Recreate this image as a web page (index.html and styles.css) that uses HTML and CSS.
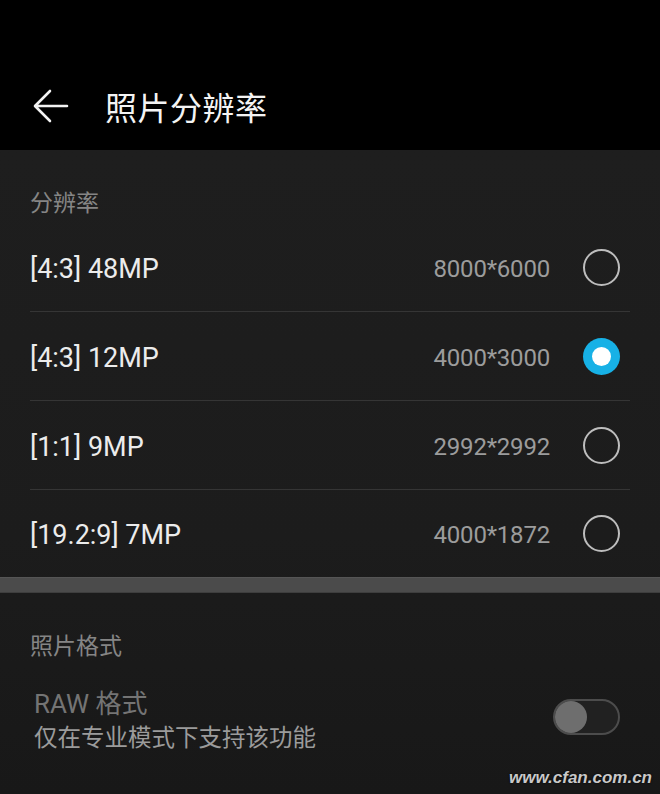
FILE: index.html
```html
<!DOCTYPE html>
<html lang="zh-CN">
<head>
<meta charset="utf-8">
<title>照片分辨率</title>
<link rel="stylesheet" href="styles.css">
</head>
<body>
<div class="screen">
  <header class="appbar">
    <svg class="back" width="36" height="34" viewBox="0 0 36 34" aria-hidden="true">
      <path d="M34 17 H3 M17 2 L2 17 L17 32" fill="none" stroke="#f2f2f2" stroke-width="2.6" stroke-linecap="round" stroke-linejoin="round"/>
    </svg>
    <h1 class="title">照片分辨率</h1>
  </header>

  <main class="content">
    <section class="group">
      <div class="group-label">分辨率</div>
      <ul class="list">
        <li class="row"><span class="name">[4:3] 48MP</span><span class="value">8000*6000</span><span class="radio"></span></li>
        <li class="row"><span class="name">[4:3] 12MP</span><span class="value">4000*3000</span><span class="radio checked"></span></li>
        <li class="row"><span class="name">[1:1] 9MP</span><span class="value">2992*2992</span><span class="radio"></span></li>
        <li class="row"><span class="name">[19.2:9] 7MP</span><span class="value">4000*1872</span><span class="radio"></span></li>
      </ul>
    </section>

    <div class="band"></div>

    <section class="group">
      <div class="group-label">照片格式</div>
      <div class="switch-row">
        <div class="switch-text">
          <div class="switch-title">RAW 格式</div>
          <div class="switch-sub">仅在专业模式下支持该功能</div>
        </div>
        <span class="toggle"><span class="knob"></span></span>
      </div>
    </section>
  </main>

  <div class="watermark">www.cfan.com.cn</div>
</div>
</body>
</html>
```

FILE: styles.css
```css
* { box-sizing: border-box; }

html, body {
  margin: 0;
  padding: 0;
  background: #1b1b1b;
}

body {
  font-family: Roboto, "Noto Sans CJK SC", sans-serif;
  color: #e8e8e8;
}

.screen {
  position: relative;
  width: 660px;
  height: 794px;
  overflow: hidden;
  display: flex;
  flex-direction: column;
}

.appbar {
  height: 150px;
  flex: none;
  background: #000;
  display: flex;
  align-items: center;
  padding-top: 62px;
  padding-left: 33px;
}

.back {
  display: block;
  flex: none;
}

.title {
  margin: 0 0 0 36px;
  font-family: "Noto Sans CJK SC", sans-serif;
  font-weight: 400;
  font-size: 32px;
  line-height: 40px;
  color: #f4f4f4;
  letter-spacing: 0.5px;
}

.content {
  flex: 1;
  background: linear-gradient(#1e1e1e, #1c1c1c 60%, #181818);
}

.group-label {
  padding: 40px 30px 10px;
  font-family: "Noto Sans CJK SC", sans-serif;
  font-size: 23px;
  line-height: 23px;
  color: #858585;
}

.list {
  list-style: none;
  margin: 0;
  padding: 0;
}

.row {
  height: 89px;
  margin: 0 30px;
  padding-right: 10px;
  display: flex;
  align-items: center;
  border-bottom: 1px solid #353535;
}

.row:last-child {
  border-bottom: none;
  height: 87px;
}

.name {
  flex: 1;
  font-size: 27px;
  padding-top: 3px;
  color: #ececec;
}

.value {
  font-size: 24px;
  padding-top: 3px;
  color: #9c9c9c;
  margin-right: 33px;
  letter-spacing: -0.2px;
}

.radio {
  width: 37px;
  height: 37px;
  border-radius: 50%;
  border: 2px solid #bdbdbd;
  flex: none;
  display: flex;
  align-items: center;
  justify-content: center;
}

.radio.checked {
  border: none;
  background: #17b1e6;
}

.radio.checked::after {
  content: "";
  width: 19px;
  height: 19px;
  border-radius: 50%;
  background: #fff;
}

.band {
  height: 16px;
  background: #4b4b4b;
  border-top: 1px solid #555;
  border-bottom: 1px solid #3e3e3e;
}

.switch-row {
  display: flex;
  align-items: flex-start;
  padding: 23px 40px 0 34px;
}

.switch-text {
  flex: 1;
}

.switch-title {
  font-size: 26px;
  line-height: 30px;
  color: #747474;
}

.switch-sub {
  margin-top: 2px;
  font-family: "Noto Sans CJK SC", sans-serif;
  font-size: 23.5px;
  line-height: 30px;
  color: #9b9b9b;
}

.toggle {
  margin-top: 10px;
  width: 67px;
  height: 36px;
  border-radius: 18px;
  border: 2px solid #4c4c4c;
  background: #212121;
  display: flex;
  align-items: center;
  flex: none;
}

.knob {
  width: 32px;
  height: 32px;
  border-radius: 50%;
  background: #6e6e6e;
}

.watermark {
  position: absolute;
  right: 8px;
  bottom: 6px;
  font-family: "Liberation Sans", sans-serif;
  font-weight: 700;
  font-style: italic;
  font-size: 17px;
  color: #c9c9c9;
  text-shadow: 0 0 2px #000;
}
```
